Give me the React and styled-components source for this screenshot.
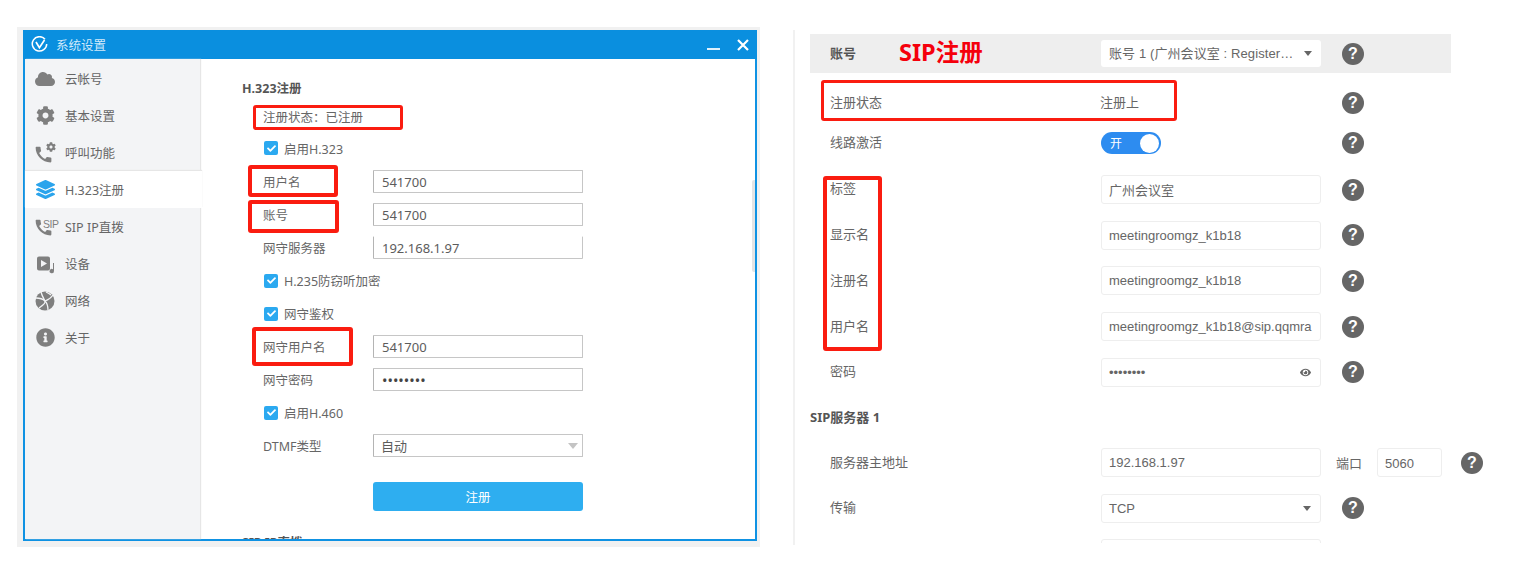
import styled, { createGlobalStyle } from "styled-components";
import { FaCloud, FaCog, FaLayerGroup, FaInfoCircle, FaCheck, FaEye } from "react-icons/fa";
import { MdCall } from "react-icons/md";

const GlobalStyle = createGlobalStyle`
  html, body {
    margin: 0;
    padding: 0;
    background: #ffffff;
  }
  * {
    box-sizing: border-box;
  }
`;

const sideItems = [
  { key: "cloud", label: "云帐号" },
  { key: "gear", label: "基本设置" },
  { key: "call", label: "呼叫功能" },
  { key: "layers", label: "H.323注册", active: true },
  { key: "sip", label: "SIP IP直拨" },
  { key: "device", label: "设备" },
  { key: "net", label: "网络" },
  { key: "info", label: "关于" },
];

function SideIcon({ name }) {
  if (name === "cloud") return <FaCloud size={20} />;
  if (name === "gear") return <FaCog size={19} />;
  if (name === "layers") return <FaLayerGroup size={19} color="#2ba4ec" />;
  if (name === "info") return <FaInfoCircle size={19} />;
  if (name === "call")
    return (
      <IconStack>
        <PhoneIcon size={21} $top={2} />
        <SmallGear><FaCog size={10} /></SmallGear>
      </IconStack>
    );
  if (name === "sip")
    return (
      <IconStack>
        <PhoneIcon size={21} $top={1} />
        <SipTag>SIP</SipTag>
      </IconStack>
    );
  if (name === "device")
    return (
      <svg width="22" height="22" viewBox="0 0 22 22">
        <path
          fillRule="evenodd"
          fill="#7f7f7f"
          d="M5 3.5h9a2 2 0 0 1 2 2v10a2 2 0 0 1-2 2H5a2 2 0 0 1-2-2v-10a2 2 0 0 1 2-2zM7 7v7l6-3.5z"
        />
        <path fill="#7f7f7f" d="M19 10h1v8a2.2 2.2 0 1 1-1-1.8z" />
      </svg>
    );
  return (
    <svg width="20" height="20" viewBox="0 0 20 20">
      <circle cx="10" cy="10" r="9.5" fill="#7f7f7f" />
      <g stroke="#f3f4f6" strokeWidth="1.3" fill="none">
        <path d="M1 7c4 0 7 1 9 3s3 5 3 9" />
        <path d="M6 1c1 4 3 7 4 9s-3 5-6 7" />
        <path d="M10 10c3-1 6-3 8-6" />
        <path d="M11 1c2 1 4 2 5 3" />
      </g>
    </svg>
  );
}

function Check({ children }) {
  return (
    <CheckRow>
      <CheckBox><FaCheck size={9} color="#fff" /></CheckBox>
      {children}
    </CheckRow>
  );
}

function Help() {
  return <HelpDot>?</HelpDot>;
}

function App() {
  return (
    <Page>
      <GlobalStyle />
      <LeftShot>
        <Win>
          <TitleBar>
            <TitleLeft>
              <svg width="17" height="17" viewBox="0 0 17 17">
                <path d="M14 3.2A7.2 7.2 0 1 0 15.7 8" fill="none" stroke="#fff" strokeWidth="1.5" />
                <path d="M5 6l3.4 5.6L13.5 4" fill="none" stroke="#fff" strokeWidth="1.7" />
              </svg>
              <TitleText>系统设置</TitleText>
            </TitleLeft>
            <TitleButtons>
              <MinBtn />
              <svg width="12" height="12" viewBox="0 0 12 12">
                <path d="M1 1l10 10M11 1L1 11" stroke="#fff" strokeWidth="2.2" />
              </svg>
            </TitleButtons>
          </TitleBar>
          <WinBody>
            <Sidebar>
              {sideItems.map((item) => (
                <SideItem key={item.key} $active={item.active}>
                  <SideIconBox><SideIcon name={item.key} /></SideIconBox>
                  {item.label}
                </SideItem>
              ))}
            </Sidebar>
            <Main>
              <MainTitle>H.323注册</MainTitle>
              <StatusLine>{"注册状态\uFF1A已注册"}</StatusLine>
              <Check>启用H.323</Check>
              <FormRow>
                <FormLabel>用户名</FormLabel>
                <TextBox>541700</TextBox>
              </FormRow>
              <FormRow>
                <FormLabel>账号</FormLabel>
                <TextBox>541700</TextBox>
              </FormRow>
              <FormRow>
                <FormLabel>网守服务器</FormLabel>
                <TextBox $noTop>192.168.1.97</TextBox>
              </FormRow>
              <Check>H.235防窃听加密</Check>
              <Check>网守鉴权</Check>
              <FormRow>
                <FormLabel>网守用户名</FormLabel>
                <TextBox>541700</TextBox>
              </FormRow>
              <FormRow>
                <FormLabel>网守密码</FormLabel>
                <TextBox $dots>••••••••</TextBox>
              </FormRow>
              <Check>启用H.460</Check>
              <FormRow>
                <FormLabel>DTMF类型</FormLabel>
                <TextBox $select>
                  自动
                  <GreyCaret />
                </TextBox>
              </FormRow>
              <SubmitBtn>注册</SubmitBtn>
              <NextTitle>SIP IP直拨</NextTitle>
              <ScrollThumb />
            </Main>
          </WinBody>
          <Mark $x={228} $y={75} $w={150} $h={25} $b={3} />
          <Mark $x={223} $y={135} $w={90} $h={32} $b={4} />
          <Mark $x={223} $y={170} $w={91} $h={33} $b={4} />
          <Mark $x={227} $y={297} $w={101} $h={39} $b={4} />
        </Win>
      </LeftShot>

      <Divider />

      <RightShot>
        <AccountBand>
          <AccountLabel>账号</AccountLabel>
          <SipHeading>SIP注册</SipHeading>
          <AccountSelect>
            <SelectText>账号 1 (广州会议室 : Register…</SelectText>
            <CaretShape />
          </AccountSelect>
          <Help />
        </AccountBand>

        <StatusRow>
          <RowLabel>注册状态</RowLabel>
          <PlainValue>注册上</PlainValue>
          <Help />
        </StatusRow>
        <StatusRow>
          <RowLabel>线路激活</RowLabel>
          <Toggle>
            <ToggleText>开</ToggleText>
            <ToggleKnob />
          </Toggle>
          <Help />
        </StatusRow>

        <FieldGroup>
          <Row>
            <RowLabel $up>标签</RowLabel>
            <Field>广州会议室</Field>
            <Help />
          </Row>
          <Row>
            <RowLabel>显示名</RowLabel>
            <Field>meetingroomgz_k1b18</Field>
            <Help />
          </Row>
          <Row>
            <RowLabel>注册名</RowLabel>
            <Field>meetingroomgz_k1b18</Field>
            <Help />
          </Row>
          <Row>
            <RowLabel>用户名</RowLabel>
            <Field>meetingroomgz_k1b18@sip.qqmra</Field>
            <Help />
          </Row>
          <Row>
            <RowLabel>密码</RowLabel>
            <Field $between>
              ••••••••
              <FaEye size={11} color="#666" />
            </Field>
            <Help />
          </Row>
        </FieldGroup>

        <SectionTitle>SIP服务器 1</SectionTitle>

        <Row>
          <RowLabel>服务器主地址</RowLabel>
          <Field>192.168.1.97</Field>
          <PortLabel>端口</PortLabel>
          <PortField>5060</PortField>
          <Help />
        </Row>
        <Row>
          <RowLabel>传输</RowLabel>
          <Field $between>
            TCP
            <CaretShape />
          </Field>
          <Help />
        </Row>
        <Row>
          <RowLabel />
          <Field />
        </Row>

        <Mark $x={11} $y={46} $w={356} $h={41} $b={3} />
        <Mark $x={13} $y={142} $w={59} $h={175} $b={4} />
      </RightShot>
    </Page>
  );
}

const Page = styled.div`
  width: 1521px;
  height: 568px;
  overflow: hidden;
  display: flex;
  align-items: flex-start;
  background: #ffffff;
  font-family: "Noto Sans", "Noto Sans CJK SC", sans-serif;
  color: #666666;
`;

const LeftShot = styled.div`
  width: 743px;
  height: 520px;
  margin: 27px 0 0 17px;
  padding: 3px 3px 6px 6px;
  background: #f1f1f1;
`;

const Win = styled.div`
  position: relative;
  height: 100%;
  display: flex;
  flex-direction: column;
  background: #ffffff;
  border: 2px solid #0f92e3;
  border-top: none;
`;

const TitleBar = styled.div`
  height: 29px;
  margin: 0 -2px;
  flex-shrink: 0;
  display: flex;
  align-items: center;
  justify-content: space-between;
  padding: 0 8px;
  background: #0a8fdf;
`;

const TitleLeft = styled.div`
  display: flex;
  align-items: center;
  gap: 8px;
`;

const TitleText = styled.span`
  font-size: 12.5px;
  color: #d3eafa;
`;

const TitleButtons = styled.div`
  display: flex;
  align-items: center;
  gap: 17px;
`;

const MinBtn = styled.div`
  width: 13px;
  height: 2px;
  margin-top: 8px;
  background: #dff1fc;
`;

const WinBody = styled.div`
  flex: 1;
  min-height: 0;
  display: flex;
`;

const Sidebar = styled.div`
  width: 175px;
  flex-shrink: 0;
  padding-top: 1px;
  background: #f3f4f6;
  box-shadow: 1px 0 1px #e6e6e6;
  z-index: 1;
`;

const SideItem = styled.div`
  position: relative;
  height: 37px;
  display: flex;
  align-items: center;
  padding-left: 9px;
  font-size: 12.5px;
  color: #666666;
  background: ${(p) => (p.$active ? "#ffffff" : "transparent")};
  margin-right: ${(p) => (p.$active ? "-2px" : "0")};
  box-shadow: ${(p) => (p.$active ? "0 -1px 1px #e6e6e6" : "none")};
`;

const SideIconBox = styled.span`
  width: 22px;
  height: 22px;
  margin-right: 9px;
  display: flex;
  align-items: center;
  justify-content: center;
  color: #7f7f7f;
`;

const IconStack = styled.span`
  position: relative;
  width: 22px;
  height: 22px;
  display: block;
`;

const PhoneIcon = styled(MdCall)`
  display: block;
  margin: ${(p) => p.$top}px 0 0 -1px;
`;

const SmallGear = styled.span`
  position: absolute;
  top: 0;
  right: 0;
  line-height: 0;
`;

const SipTag = styled.span`
  position: absolute;
  top: 2px;
  left: 8px;
  padding-left: 1px;
  font: 10.5px/12px "Liberation Sans", sans-serif;
  letter-spacing: -0.5px;
  color: #7f7f7f;
  background: #f3f4f6;
`;

const Main = styled.div`
  position: relative;
  flex: 1;
  min-width: 0;
  overflow: hidden;
  padding: 16px 0 0 42px;
  font-size: 12.5px;
  color: #666666;
`;

const MainTitle = styled.div`
  height: 28px;
  line-height: 28px;
  font-weight: 700;
  color: #555555;
`;

const StatusLine = styled.div`
  height: 28px;
  line-height: 30px;
  padding-left: 21px;
`;

const CheckRow = styled.div`
  height: 33px;
  display: flex;
  align-items: center;
  gap: 6px;
  padding-left: 22px;
  &:nth-child(3) {
    height: 34px;
  }
`;

const CheckBox = styled.span`
  width: 14px;
  height: 14px;
  display: flex;
  align-items: center;
  justify-content: center;
  border-radius: 2px;
  background: #2ba9f0;
`;

const FormRow = styled.div`
  height: 33px;
  display: flex;
  align-items: center;
  padding-left: 21px;
`;

const FormLabel = styled.span`
  width: 110px;
`;

const TextBox = styled.div`
  position: relative;
  width: 210px;
  height: 23px;
  display: flex;
  align-items: center;
  padding-left: ${(p) => (p.$select ? "7px" : "8px")};
  font-size: ${(p) => (p.$dots ? "14.5px" : "13px")};
  color: ${(p) => (p.$dots ? "#444444" : "#5c5c5c")};
  background: #ffffff;
  border: 1px solid #c6c6c6;
  border-top-color: ${(p) => (p.$noTop ? "transparent" : "#c6c6c6")};
  border-left-color: #b4b4b4;
  border-radius: 1px;
`;

const GreyCaret = styled.span`
  position: absolute;
  right: 4px;
  top: 8px;
  border-left: 5.5px solid transparent;
  border-right: 5.5px solid transparent;
  border-top: 6px solid #c4c4c4;
`;

const SubmitBtn = styled.div`
  width: 210px;
  height: 29px;
  margin: 20px 0 0 131px;
  display: flex;
  align-items: center;
  justify-content: center;
  border-radius: 3px;
  background: #2eaef0;
  color: #ffffff;
`;

const NextTitle = styled.div`
  margin-top: 24px;
  font-weight: 700;
  line-height: 16px;
  color: #555555;
`;

const ScrollThumb = styled.div`
  position: absolute;
  top: 121px;
  right: 0;
  width: 3px;
  height: 92px;
  border-radius: 2px 0 0 2px;
  background: #e4e4e4;
`;

const Mark = styled.div`
  position: absolute;
  left: ${(p) => p.$x}px;
  top: ${(p) => p.$y}px;
  width: ${(p) => p.$w}px;
  height: ${(p) => p.$h}px;
  border: ${(p) => p.$b}px solid #fa1c10;
  border-radius: 3px;
  pointer-events: none;
  z-index: 2;
`;

const Divider = styled.div`
  width: 2px;
  height: 515px;
  margin: 30px 0 0 33px;
  background: #f1f1f1;
`;

const RightShot = styled.div`
  position: relative;
  width: 690px;
  height: 509px;
  margin: 34px 0 0 15px;
  overflow: hidden;
  font-size: 13px;
  color: #666666;
`;

const AccountBand = styled.div`
  width: 641px;
  height: 39px;
  margin-bottom: 10px;
  display: flex;
  align-items: center;
  padding-left: 20px;
  background: #eeeeee;
`;

const AccountLabel = styled.span`
  width: 69px;
  margin-top: -2px;
  font-weight: 700;
  color: #555555;
`;

const SipHeading = styled.span`
  width: 202px;
  margin-top: -3px;
  font-size: 23.5px;
  font-weight: 700;
  line-height: 30px;
  color: #f5000c;
`;

const AccountSelect = styled.div`
  width: 220px;
  height: 27px;
  display: flex;
  align-items: center;
  justify-content: space-between;
  padding: 0 9px 0 8px;
  border-radius: 3px;
  background: #ffffff;
  font-family: "Liberation Sans", "Noto Sans CJK SC", sans-serif;
`;

const SelectText = styled.span`
  margin-top: -2px;
  letter-spacing: 0.1px;
  white-space: nowrap;
`;

const CaretShape = styled.span`
  border-left: 4.5px solid transparent;
  border-right: 4.5px solid transparent;
  border-top: 5px solid #666666;
`;

const HelpDot = styled.span`
  flex-shrink: 0;
  width: 22px;
  height: 22px;
  margin-left: 21px;
  display: flex;
  align-items: center;
  justify-content: center;
  border-radius: 50%;
  background: #666666;
  color: #ffffff;
  font: 700 16px/22px "Liberation Sans", sans-serif;
`;

const StatusRow = styled.div`
  height: 40px;
  display: flex;
  align-items: center;
  padding-left: 20px;
`;

const Row = styled.div`
  height: 45.6px;
  display: flex;
  align-items: center;
  padding-left: 20px;
`;

const FieldGroup = styled.div`
  margin-top: 4px;
`;

const RowLabel = styled.span`
  width: 271px;
  flex-shrink: 0;
  margin-top: ${(p) => (p.$up ? "-5px" : "-3px")};
`;

const PlainValue = styled.span`
  width: 220px;
  margin-top: -4px;
  margin-left: -1px;
  margin-right: 1px;
`;

const Toggle = styled.div`
  width: 60px;
  height: 22px;
  margin-right: 160px;
  display: flex;
  align-items: center;
  justify-content: space-between;
  padding: 0 2px 0 9px;
  border-radius: 11px;
  background: #2d8cf0;
`;

const ToggleText = styled.span`
  font-size: 12px;
  color: #ffffff;
`;

const ToggleKnob = styled.span`
  width: 19px;
  height: 19px;
  border-radius: 50%;
  background: #ffffff;
`;

const Field = styled.div`
  width: 220px;
  height: 29px;
  flex-shrink: 0;
  display: flex;
  align-items: center;
  justify-content: ${(p) => (p.$between ? "space-between" : "flex-start")};
  padding: 0 ${(p) => (p.$between ? "9px" : "7px")} 0 7px;
  border: 1px solid #eeeeee;
  border-radius: 3px;
  background: #ffffff;
  white-space: nowrap;
  overflow: hidden;
  font-family: "Liberation Sans", "Noto Sans CJK SC", sans-serif;
`;

const SectionTitle = styled.div`
  height: 30px;
  line-height: 30px;
  margin: 7px 0 8px;
  font-weight: 700;
  color: #555555;
`;

const PortLabel = styled.span`
  width: 41px;
  margin-left: 15px;
  flex-shrink: 0;
`;

const PortField = styled(Field)`
  width: 65px;
  padding-top: 2px;
  & + span {
    margin-left: 19px;
  }
`;

export default App;
